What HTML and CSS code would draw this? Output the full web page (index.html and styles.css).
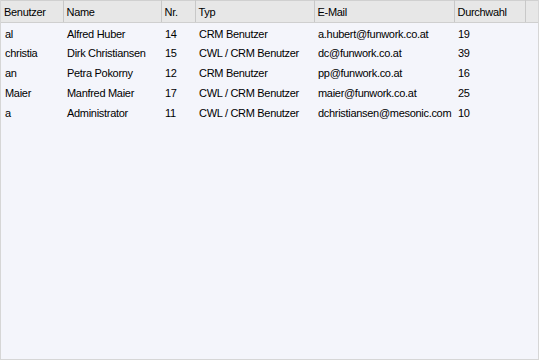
FILE: index.html
```html
<!DOCTYPE html>
<html lang="de">
<head>
  <meta charset="UTF-8">
  <title>Benutzer</title>
  <link rel="stylesheet" href="styles.css">
</head>
<body>
  <div class="grid">
    <table class="users">
      <colgroup>
        <col class="c-user">
        <col class="c-name">
        <col class="c-nr">
        <col class="c-typ">
        <col class="c-mail">
        <col class="c-dw">
        <col class="c-fill">
      </colgroup>
      <thead>
        <tr>
          <th>Benutzer</th>
          <th>Name</th>
          <th>Nr.</th>
          <th>Typ</th>
          <th>E-Mail</th>
          <th>Durchwahl</th>
          <th class="fill"></th>
        </tr>
      </thead>
      <tbody>
        <tr><td>al</td><td>Alfred Huber</td><td>14</td><td>CRM Benutzer</td><td>a.hubert@funwork.co.at</td><td>19</td><td></td></tr>
        <tr><td>christia</td><td>Dirk Christiansen</td><td>15</td><td>CWL / CRM Benutzer</td><td>dc@funwork.co.at</td><td>39</td><td></td></tr>
        <tr><td>an</td><td>Petra Pokorny</td><td>12</td><td>CRM Benutzer</td><td>pp@funwork.co.at</td><td>16</td><td></td></tr>
        <tr><td>Maier</td><td>Manfred Maier</td><td>17</td><td>CWL / CRM Benutzer</td><td>maier@funwork.co.at</td><td>25</td><td></td></tr>
        <tr><td>a</td><td>Administrator</td><td>11</td><td>CWL / CRM Benutzer</td><td>dchristiansen@mesonic.com</td><td>10</td><td></td></tr>
      </tbody>
    </table>
  </div>
</body>
</html>
```
FILE: styles.css
```css
* {
  margin: 0;
  padding: 0;
  box-sizing: border-box;
}
html, body {
  height: 100%;
  overflow: hidden;
}
body {
  font-family: "Liberation Sans", Arial, sans-serif;
  font-size: 11px;
  letter-spacing: -0.3px;
  color: #000;
  background: #f4f5fb;
}

/* outer frame of the list view */
.grid {
  height: 100%;
  border: 1px solid #d6d6d6;
  border-top: none;
  background: #f4f5fb;
}

.users {
  border-collapse: collapse;
  table-layout: fixed;
  width: 100%;
}
.c-user { width: 62px; }
.c-name { width: 98px; }
.c-nr { width: 34px; }
.c-typ { width: 119px; }
.c-mail { width: 140px; }
.c-dw { width: 71px; }

.users th {
  height: 22px;
  padding: 0 3px;
  text-align: left;
  font-weight: normal;
  white-space: nowrap;
  background: #e7e7e7;
  border-top: 1px solid #d0d0d0;
  border-bottom: 1px solid #cfcfcf;
  border-right: 1px solid #c8c8c8;
}
.users th.fill {
  border-right: none;
}

.users td {
  height: 20px;
  padding: 0 4px;
  white-space: nowrap;
}
.users tbody tr:first-child td {
  padding-top: 2px;
}
```
